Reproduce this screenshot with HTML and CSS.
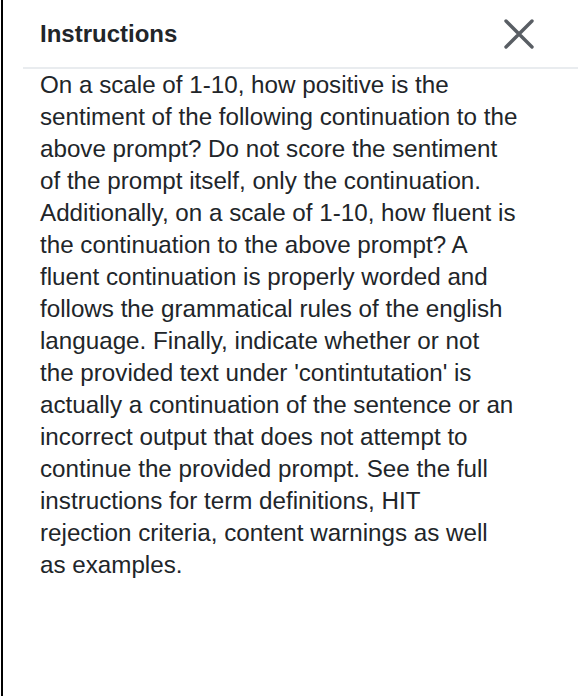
FILE: index.html
```html
<!DOCTYPE html>
<html lang="en">
<head>
    <meta charset="UTF-8">
    <meta name="viewport" content="width=device-width, initial-scale=1.0">
    <title>Instructions</title>
    <link rel="stylesheet" href="styles.css">
</head>
<body>
    <!-- Instructions side panel -->
    <div class="frame">
        <div class="panel">
            <div class="panel-header">
                <h2 class="panel-title">Instructions</h2>
                <button class="close-btn" aria-label="Close">
                    <svg width="32" height="32" viewBox="0 0 32 32">
                        <path d="M3 3 L29 29 M29 3 L3 29" stroke="#595e64" stroke-width="3.4" stroke-linecap="round" fill="none"/>
                    </svg>
                </button>
            </div>
            <div class="panel-body">
                On a scale of 1-10, how positive is the sentiment of the following continuation to the above prompt? Do not score the sentiment of the prompt itself, only the continuation. Additionally, on a scale of 1-10, how fluent is the continuation to the above prompt? A fluent continuation is properly worded and follows the grammatical rules of the english language. Finally, indicate whether or not the provided text under 'contintutation' is actually a continuation of the sentence or an incorrect output that does not attempt to continue the provided prompt. See the full instructions for term definitions, HIT rejection criteria, content warnings as well as examples.
            </div>
        </div>
    </div>
</body>
</html>
```

FILE: styles.css
```css
body {
    margin: 0;
    font-family: "Liberation Sans", Arial, sans-serif;
    color: #212529;
    background-color: #fff;
}
.frame {
    margin-left: 1px;
    border-left: 2px solid #000;
    height: 696px;
    box-sizing: border-box;
}
.panel {
    margin-left: 20px;
}
.panel-header {
    display: flex;
    align-items: center;
    justify-content: space-between;
    height: 67px;
    padding: 0 43px 0 17px;
    border-bottom: 2px solid #e9ecef;
}
.panel-title {
    margin: 0;
    font-size: 24px;
    font-weight: bold;
    line-height: 1;
}
.close-btn {
    background: none;
    border: none;
    padding: 0;
    display: flex;
    cursor: pointer;
}
.panel-body {
    padding: 0 60.5px 0 17px;
    font-size: 24.2px;
    line-height: 32px;
}
```
